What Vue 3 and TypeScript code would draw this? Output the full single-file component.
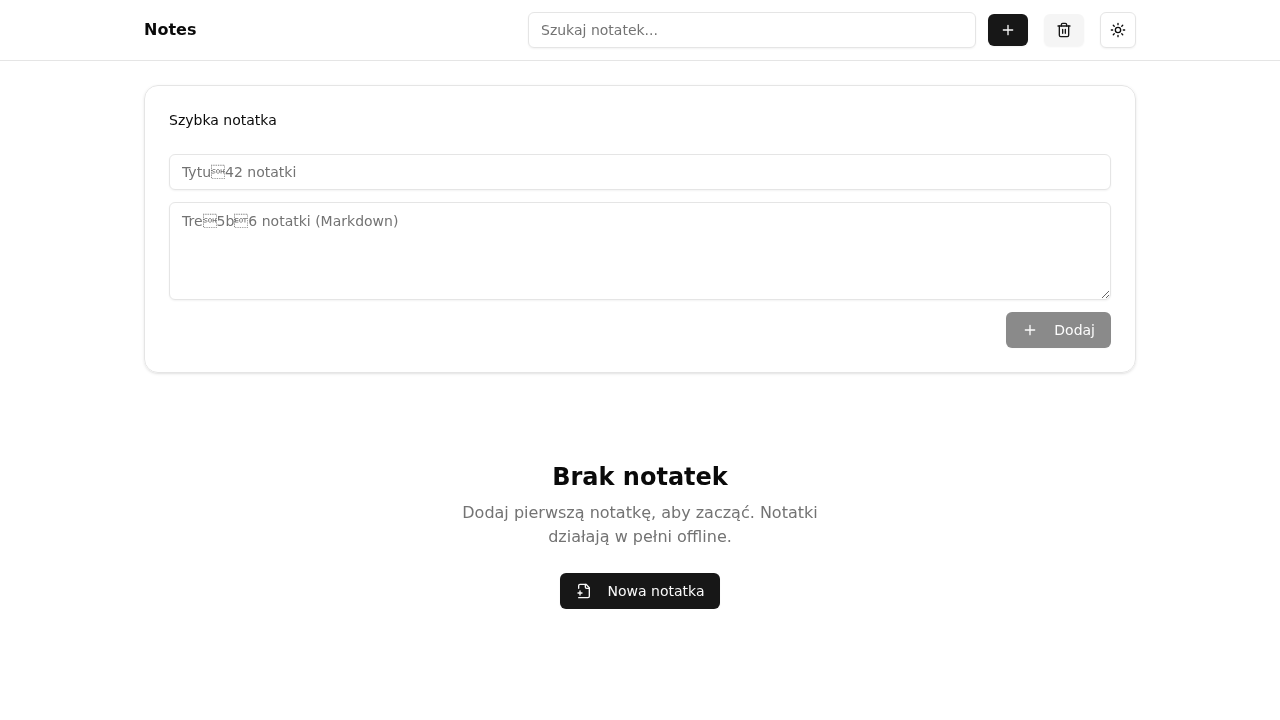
<script setup lang="ts">
// placeholdery celowo zawieraja znaki sterujace, tak jak na oryginalnym ekranie
const titlePlaceholder = 'Tytu\u000142 notatki'
const bodyPlaceholder = 'Tre\u00015b\u00046 notatki (Markdown)'
</script>

<template>
  <div class="app">
    <header class="topbar">
      <div class="topbar-inner">
        <div class="brand">Notes</div>
        <div class="actions">
          <input class="field search" type="text" placeholder="Szukaj notatek..." />
          <button class="btn btn-dark btn-add" title="Nowa notatka">
            <svg class="icon" viewBox="0 0 24 24"><path d="M5 12h14M12 5v14" /></svg>
          </button>
          <button class="btn btn-muted" title="Kosz">
            <svg class="icon" viewBox="0 0 24 24">
              <path d="M3 6h18" />
              <path d="M19 6v14c0 1-1 2-2 2H7c-1 0-2-1-2-2V6" />
              <path d="M8 6V4c0-1 1-2 2-2h4c1 0 2 1 2 2v2" />
              <path d="M10 11v6M14 11v6" />
            </svg>
          </button>
          <button class="btn btn-outline" title="Motyw">
            <svg class="icon" viewBox="0 0 24 24">
              <circle cx="12" cy="12" r="4" />
              <path d="M12 2v2M12 20v2M4.93 4.93l1.41 1.41M17.66 17.66l1.41 1.41M2 12h2M20 12h2M6.34 17.66l-1.41 1.41M19.07 4.93l-1.41 1.41" />
            </svg>
          </button>
        </div>
      </div>
    </header>

    <main class="content">
      <section class="card">
        <h2 class="card-title">Szybka notatka</h2>
        <div class="form">
          <input class="field" type="text" :placeholder="titlePlaceholder" />
          <textarea class="field area" :placeholder="bodyPlaceholder"></textarea>
          <div class="form-footer">
            <button class="btn btn-dark btn-text btn-disabled" disabled>
              <svg class="icon" viewBox="0 0 24 24"><path d="M5 12h14M12 5v14" /></svg>
              Dodaj
            </button>
          </div>
        </div>
      </section>

      <section class="empty">
        <h3 class="empty-title">Brak notatek</h3>
        <p class="empty-text">Dodaj pierwszą notatkę, aby zacząć. Notatki działają w pełni offline.</p>
        <button class="btn btn-dark btn-text">
          <svg class="icon" viewBox="0 0 24 24">
            <path d="M4 22h14a2 2 0 0 0 2-2V7l-5-5H6a2 2 0 0 0-2 2v4" />
            <path d="M14 2v4a2 2 0 0 0 2 2h4" />
            <path d="M3 15h6M6 12v6" />
          </svg>
          Nowa notatka
        </button>
      </section>
    </main>
  </div>
</template>

<style>
html,
body {
  background: #fff;
}
</style>

<style scoped>
.app {
  font-family: "DejaVu Sans", sans-serif;
  color: #0a0a0a;
  font-size: 14px;
  line-height: 20px;
  /* tekst bez subpikseli, jak w oryginale */
  will-change: transform;
}

.topbar {
  border-bottom: 1px solid #e5e5e5;
}

.topbar-inner {
  width: 992px;
  height: 60px;
  margin: 0 auto;
  display: flex;
  align-items: center;
  justify-content: space-between;
}

.brand {
  font-size: 16px;
  font-weight: 700;
  line-height: 24px;
}

.actions {
  display: flex;
  align-items: center;
  gap: 16px;
}

.field {
  display: block;
  box-sizing: border-box;
  width: 100%;
  height: 36px;
  padding: 0 12px;
  border: 1px solid #e5e5e5;
  border-radius: 6px;
  background: #fff;
  box-shadow: 0 1px 2px rgba(0, 0, 0, 0.05);
  font: inherit;
  color: inherit;
  outline: none;
}

.field::placeholder {
  color: #737373;
  opacity: 1;
}

.search {
  width: 448px;
  margin-right: -4px;
}

.btn {
  display: inline-flex;
  align-items: center;
  justify-content: center;
  box-sizing: border-box;
  height: 32px;
  width: 40px;
  padding: 0;
  border: 0;
  border-radius: 6px;
  box-shadow: 0 1px 2px rgba(0, 0, 0, 0.05);
  font: inherit;
  cursor: pointer;
}

.icon {
  width: 16px;
  height: 16px;
  flex: none;
  fill: none;
  stroke: currentColor;
  stroke-width: 2;
  stroke-linecap: round;
  stroke-linejoin: round;
}

.btn-dark {
  background: #171717;
  color: #fafafa;
}

.btn-muted {
  background: #f5f5f5;
  color: #171717;
}

.btn-outline {
  width: 36px;
  height: 36px;
  background: #fff;
  color: #0a0a0a;
  border: 1px solid #e5e5e5;
}

.btn-text {
  width: auto;
  height: 36px;
  padding: 0 16px;
  gap: 16px;
}

.btn-disabled {
  opacity: 0.5;
  cursor: default;
}

.content {
  width: 992px;
  margin: 0 auto;
  padding-top: 24px;
}

.card {
  padding: 24px;
  border: 1px solid #e5e5e5;
  border-radius: 14px;
  box-shadow: 0 1px 3px rgba(0, 0, 0, 0.1), 0 1px 2px -1px rgba(0, 0, 0, 0.1);
}

.card-title {
  margin: 0 0 24px;
  font-size: 14px;
  font-weight: 400;
  line-height: 20px;
}

.form {
  display: flex;
  flex-direction: column;
  gap: 12px;
}

.area {
  height: 98px;
  padding: 8px 12px;
  resize: vertical;
}

.form-footer {
  display: flex;
  justify-content: flex-end;
}

.empty {
  display: flex;
  flex-direction: column;
  align-items: center;
  padding-top: 88px;
  text-align: center;
}

.empty-title {
  margin: 0 0 8px;
  font-size: 24px;
  font-weight: 700;
  line-height: 32px;
}

.empty-text {
  width: 384px;
  margin: 0 0 24px;
  font-size: 16px;
  line-height: 24px;
  color: #737373;
}
</style>
